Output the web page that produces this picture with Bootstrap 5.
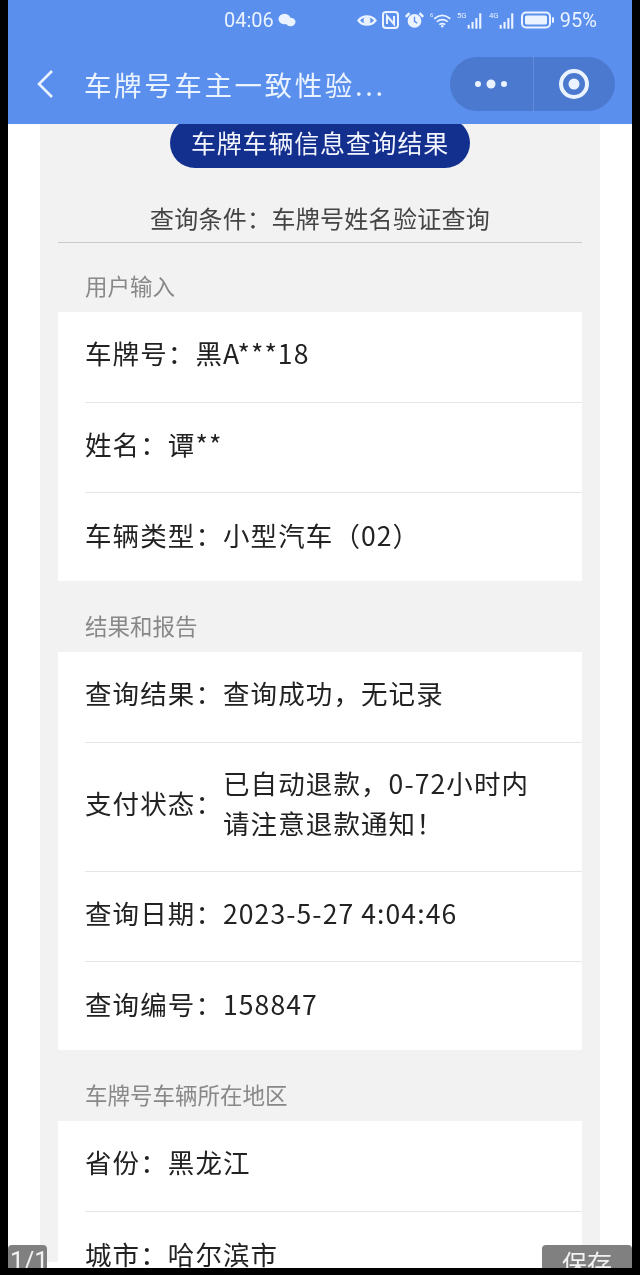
<!DOCTYPE html>
<html lang="zh-CN">
<head>
    <meta charset="UTF-8">
    <meta name="viewport" content="width=device-width, initial-scale=1.0">
    <title>车牌号车主一致性验证</title>
    <link href="https://cdn.jsdelivr.net/npm/bootstrap@5.3.0/dist/css/bootstrap.min.css" rel="stylesheet">
    <style>
        html, body { height: 100%; }
        body {
            background-color: #000;
            font-family: "Noto Sans CJK SC", "Liberation Sans", sans-serif;
            overflow: hidden;
        }
        .shell {
            margin: 0 8px;
            height: 1268px;
            background-color: #fff;
            overflow: hidden;
            position: relative;
            filter: blur(.4px);
        }
        .top-area { position: relative; z-index: 1; background-color: #5a8fee; height: 124px; color: #eaf3ff; }
        .status-bar { height: 40px; padding-right: 35px; font-family: "Roboto", sans-serif; font-size: 20px; line-height: 26px; }
        .status-time { margin-left: 216px; width: 54px; }
        .status-icons { gap: 5px; margin-left: auto; }
        .title-bar { height: 84px; padding-left: 28px; padding-top: 3px; }
        .title-text { font-size: 27.5px; letter-spacing: 2.6px; margin-left: 30px; line-height: 40px; white-space: nowrap; }
        .capsule {
            margin-left: auto;
            margin-right: 17px;
            width: 165px;
            height: 54px;
            background-color: #4a79cf;
            border-radius: 27px;
        }
        .capsule-part { width: 50%; height: 100%; }
        .capsule-part + .capsule-part { border-left: 1px solid #5f8bdc; }
        .panel {
            margin: 0 32px;
            background-color: #f2f2f2;
            height: 1144px;
            padding: 0 18px;
        }
        .result-pill {
            width: 300px;
            height: 50px;
            margin: -6px auto 0;
            padding-top: 6px;
            background-color: #14308f;
            color: #f4f6ff;
            font-size: 25px;
            line-height: 36px;
            letter-spacing: .8px;
            border-radius: 25px;
        }
        .query-line {
            height: 75px;
            padding-top: 32px;
            color: #444;
            font-size: 24px;
            line-height: 36px;
            letter-spacing: .3px;
            border-bottom: 1px solid #c9c9c9;
        }
        .section-title { height: 71px; padding: 28px 0 0 27px; color: #888; font-size: 22.5px; line-height: 32px; }
        .query-line + .section-title { height: 69px; padding-top: 26px; }
        .info-box { background-color: #fff; }
        .info-row {
            margin-left: 27px;
            height: 90px;
            padding-bottom: 8px;
            color: #222;
            font-size: 26.5px;
            letter-spacing: 1.1px;
        }
        .info-row:last-child { height: 89px; padding-bottom: 4px; }
        .info-row + .info-row { border-top: 1px solid #e6e6e6; }
        .info-row.tall { height: 129px; line-height: 40px; }
        .overlay-btn {
            position: absolute;
            bottom: 0;
            height: 23px;
            background-color: #808080;
            color: #f2f2f2;
            font-size: 25px;
            line-height: 34px;
            border-radius: 4px 4px 0 0;
            overflow: hidden;
        }
        .page-count { left: 0; width: 39px; padding-left: 2px; font-family: "Roboto", sans-serif; }
        .save-btn { right: 0; width: 90px; text-align: center; }
    </style>
</head>
<body>
    <div class="shell">
        <div class="top-area">
            <div class="status-bar d-flex align-items-center">
                <span class="status-time">04:06</span>
                <svg width="18" height="14" viewBox="0 0 18 14" fill="#eaf3ff"><ellipse cx="6.500" cy="6" rx="6" ry="5.200"/><ellipse cx="12.500" cy="9" rx="5" ry="4.200"/></svg>
                <div class="status-icons d-flex align-items-center">
                    <svg width="20" height="15" viewBox="0 0 26 18" fill="none" stroke="#eaf3ff" stroke-width="3"><path d="M2 9C7 2 19 2 24 9 19 16 7 16 2 9Z"/><circle cx="13" cy="9" r="3" fill="#eaf3ff"/></svg>
                    <svg width="17" height="18" viewBox="0 0 17 18" fill="none" stroke="#eaf3ff" stroke-width="2"><rect x="1" y="1" width="15" height="16" rx="3"/><path d="M5 13V5l7 8V5"/></svg>
                    <svg width="21" height="18" viewBox="0 0 23 19" fill="#eaf3ff"><path d="M1 5 5 1l2 2-4 4ZM22 5l-4-4-2 2 4 4Z"/><circle cx="11.500" cy="10.500" r="7.500"/><path d="M11.500 6v5l3 2" fill="none" stroke="#5a8fee" stroke-width="1.500"/></svg>
                    <svg width="22" height="18" viewBox="0 0 26 19" fill="none" stroke="#eaf3ff" stroke-width="2"><path d="M5 8c6-5 13-5 19 0M8 11.500c4-3 9-3 13 0M11 15c2-1.500 5-1.500 7 0"/><circle cx="14.500" cy="17" r="1.500" fill="#eaf3ff" stroke="none"/><text x="0" y="6" font-size="7" fill="#eaf3ff" stroke="none" font-family="Roboto, sans-serif">6</text></svg>
                    <svg width="27" height="19" viewBox="0 0 28 19" fill="#eaf3ff"><text x="0" y="7" font-size="8" font-family="Roboto, sans-serif">5G</text><rect x="11" y="14" width="2.200" height="4"/><rect x="15" y="11" width="2.200" height="7"/><rect x="19" y="7" width="2.200" height="11"/><rect x="23" y="2" width="2.200" height="16"/></svg>
                    <svg width="27" height="19" viewBox="0 0 28 19" fill="#eaf3ff"><text x="0" y="7" font-size="8" font-family="Roboto, sans-serif">4G</text><rect x="11" y="14" width="2.200" height="4"/><rect x="15" y="11" width="2.200" height="7"/><rect x="19" y="7" width="2.200" height="11"/><rect x="23" y="2" width="2.200" height="16"/></svg>
                    <svg width="34" height="18" viewBox="0 0 34 18" fill="none"><rect x="1" y="1.500" width="28" height="15" rx="4" stroke="#eaf3ff" stroke-width="2"/><rect x="4" y="4.500" width="22" height="9" rx="1.500" fill="#eaf3ff"/><rect x="31" y="6" width="2" height="6" rx="1" fill="#eaf3ff"/></svg>
                    <span>95%</span>
                </div>
            </div>
            <div class="title-bar d-flex align-items-center">
                <svg width="18" height="30" viewBox="0 0 18 30" fill="none" stroke="#eaf3ff" stroke-width="2.600"><path d="M16 2 3 15l13 13"/></svg>
                <div class="title-text">车牌号车主一致性验...</div>
                <div class="capsule d-flex align-items-center">
                    <div class="capsule-part d-flex align-items-center justify-content-center">
                        <svg width="34" height="12" viewBox="0 0 34 12" fill="#eaf3ff"><circle cx="4" cy="6" r="3"/><circle cx="17" cy="6" r="4.500"/><circle cx="30" cy="6" r="3"/></svg>
                    </div>
                    <div class="capsule-part d-flex align-items-center justify-content-center">
                        <svg width="32" height="32" viewBox="0 0 32 32"><circle cx="16" cy="16" r="13" fill="none" stroke="#eaf3ff" stroke-width="4"/><circle cx="16" cy="16" r="5.500" fill="#eaf3ff"/></svg>
                    </div>
                </div>
            </div>
        </div>

        <div class="panel">
            <div class="result-pill text-center">车牌车辆信息查询结果</div>
            <div class="query-line text-center">查询条件&#xFF1A;车牌号姓名验证查询</div>

            <div class="section-title">用户输入</div>
            <div class="info-box">
                <div class="info-row d-flex align-items-center">车牌号&#xFF1A;<span>黑A***18</span></div>
                <div class="info-row d-flex align-items-center">姓名&#xFF1A;<span>谭**</span></div>
                <div class="info-row d-flex align-items-center">车辆类型&#xFF1A;<span>小型汽车&#xFF08;02&#xFF09;</span></div>
            </div>

            <div class="section-title">结果和报告</div>
            <div class="info-box">
                <div class="info-row d-flex align-items-center">查询结果&#xFF1A;<span>查询成功&#xFF0C;无记录</span></div>
                <div class="info-row tall d-flex align-items-center">支付状态&#xFF1A;<span>已自动退款&#xFF0C;0-72小时内<br>请注意退款通知&#xFF01;</span></div>
                <div class="info-row d-flex align-items-center">查询日期&#xFF1A;<span>2023-5-27 4:04:46</span></div>
                <div class="info-row d-flex align-items-center">查询编号&#xFF1A;<span>158847</span></div>
            </div>

            <div class="section-title">车牌号车辆所在地区</div>
            <div class="info-box">
                <div class="info-row d-flex align-items-center">省份&#xFF1A;<span>黑龙江</span></div>
                <div class="info-row d-flex align-items-center">城市&#xFF1A;<span>哈尔滨市</span></div>
            </div>
        </div>

        <div class="overlay-btn page-count">1/1</div>
        <div class="overlay-btn save-btn">保存</div>
    </div>

    <script src="https://cdn.jsdelivr.net/npm/bootstrap@5.3.0/dist/js/bootstrap.bundle.min.js"></script>
</body>
</html>
